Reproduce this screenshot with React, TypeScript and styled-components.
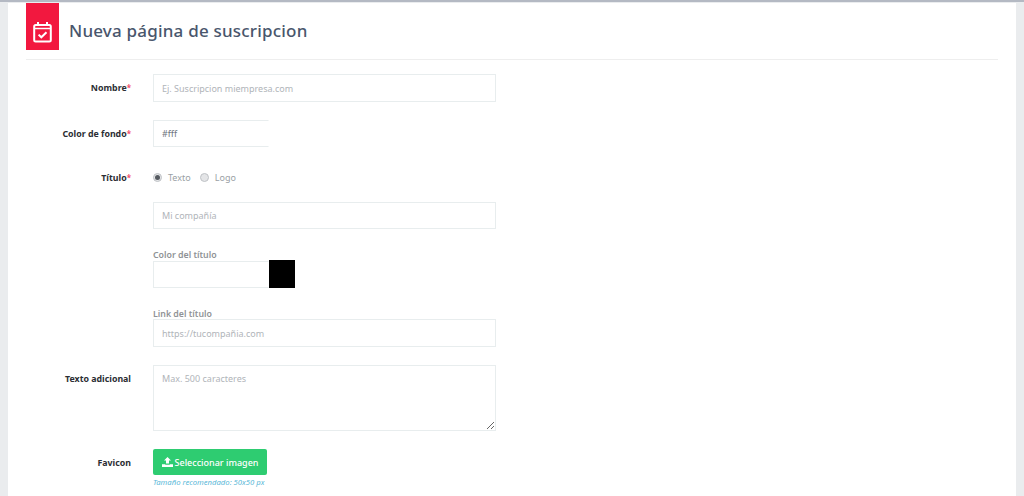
import React from 'react'
import styled, { createGlobalStyle } from 'styled-components'

const GlobalStyle = createGlobalStyle`
  html, body {
    margin: 0;
    height: 100%;
    overflow: hidden;
    background: #eaecee;
    font-family: "Noto Sans", "Open Sans", sans-serif;
  }
`

const Page = styled.div`
  height: 496px;
  border-top: 2px solid #b4b9c3;
  box-sizing: border-box;
  padding: 1px 8px 0;
  overflow: hidden;
`

const Card = styled.div`
  background: #fff;
  height: 600px;
  padding: 0 18px;
`

const Header = styled.div`
  display: flex;
  align-items: flex-start;
  height: 56px;
  border-bottom: 1px solid #eeeeee;
  margin-bottom: 14px;
`

const IconBox = styled.div`
  width: 33px;
  height: 47px;
  background: #f2183f;
  display: flex;
  align-items: flex-end;
  justify-content: center;
  padding-bottom: 7px;
  box-sizing: border-box;
`

const Title = styled.h1`
  margin: 16px 0 0 10px;
  font-size: 17px;
  line-height: 24px;
  font-weight: 500;
  letter-spacing: 0.2px;
  color: #49566c;
`

const Row = styled.div<{ $gap: number }>`
  display: grid;
  grid-template-columns: 105px 1fr;
  column-gap: 22px;
  margin-bottom: ${(p) => p.$gap}px;
`

const Label = styled.label`
  text-align: right;
  font-size: 8.8px;
  line-height: 14px;
  font-weight: 700;
  color: #2b2e33;
  padding-top: 6.5px;
`

const Req = styled.span`
  color: #f2506c;
  font-size: 8px;
`

const Field = styled.div<{ $gap?: number }>`
  display: flex;
  flex-direction: column;
  margin-bottom: ${(p) => p.$gap ?? 0}px;
`

const SubLabel = styled.div`
  font-size: 8.8px;
  line-height: 9px;
  padding-top: 2px;
  font-weight: 600;
  color: #8f9396;
`

const Input = styled.input<{ $h?: number; $w?: number; $open?: boolean }>`
  display: block;
  box-sizing: border-box;
  width: ${(p) => p.$w ?? 343}px;
  height: ${(p) => p.$h ?? 28}px;
  padding: 0 8px;
  border: 1px solid #e8edee;
  border-right-color: ${(p) => (p.$open ? 'transparent' : '#e8edee')};
  background: #fff;
  outline: none;
  font-family: inherit;
  font-size: 9px;
  color: #6f7680;

  &::placeholder {
    color: #b0b4b9;
    opacity: 1;
  }
`

const TextArea = styled.textarea`
  display: block;
  box-sizing: border-box;
  width: 343px;
  height: 66px;
  padding: 6px 8px;
  border: 1px solid #e8edee;
  outline: none;
  font-family: inherit;
  font-size: 9px;

  &::placeholder {
    color: #b0b4b9;
    opacity: 1;
  }
`

const ColorPick = styled.div`
  display: flex;
  align-items: flex-end;
`

const Swatch = styled.div`
  width: 26px;
  height: 28px;
  background: #000;
`

const Radios = styled.div`
  display: flex;
  align-items: center;
  height: 14px;
  padding-top: 6px;
  font-size: 9px;
  color: #9a9fa5;
`

const Radio = styled.span<{ $on?: boolean }>`
  display: inline-flex;
  align-items: center;
  justify-content: center;
  box-sizing: border-box;
  width: 9px;
  height: 9px;
  margin-right: 6px;
  border-radius: 50%;
  border: 1px solid #bfc2c6;
  background: #e4e5e7;

  &::after {
    content: '';
    display: ${(p) => (p.$on ? 'block' : 'none')};
    width: 5px;
    height: 5px;
    border-radius: 50%;
    background: #555a60;
  }
`

const RadioText = styled.span`
  margin-right: 9px;
`

const UploadButton = styled.button`
  display: flex;
  align-items: center;
  justify-content: center;
  gap: 2px;
  width: 114px;
  height: 26px;
  padding: 0;
  border: 0;
  border-radius: 2px;
  background: #2ecc71;
  color: #fff;
  font-family: inherit;
  font-size: 9px;
  font-weight: 500;
`

const Help = styled.div`
  margin-top: 1px;
  font-size: 7.7px;
  line-height: 12px;
  font-style: italic;
  color: #5bb8d8;
`

export default function App() {
  return (
    <>
      <GlobalStyle />
      <Page>
        <Card>
          <Header>
            <IconBox>
              <svg width="19" height="22" viewBox="0 0 19 22" fill="none" stroke="#fff">
                <rect x="1.2" y="4" width="16.6" height="16.6" rx="1.5" strokeWidth="2" />
                <path d="M5 1v4M14 1v4" strokeWidth="2" />
                <path d="M1.5 7.5h16" strokeWidth="1.5" />
                <path d="M5.6 13.6l2.7 2.7 5.2-5" strokeWidth="2" />
              </svg>
            </IconBox>
            <Title>Nueva página de suscripcion</Title>
          </Header>

          <Row $gap={18}>
            <Label>Nombre<Req>*</Req></Label>
            <Input placeholder="Ej. Suscripcion miempresa.com" />
          </Row>

          <Row $gap={17}>
            <Label>Color de fondo<Req>*</Req></Label>
            <Input $w={116} $h={27} $open defaultValue="#fff" />
          </Row>

          <Row $gap={0}>
            <Label>Título<Req>*</Req></Label>
            <div>
              <Field $gap={18}>
                <Radios>
                  <Radio $on />
                  <RadioText>Texto</RadioText>
                  <Radio />
                  <RadioText>Logo</RadioText>
                </Radios>
              </Field>
              <Field $gap={20}>
                <Input $h={27} placeholder="Mi compañía" />
              </Field>
              <Field $gap={20}>
                <SubLabel>Color del título</SubLabel>
                <ColorPick>
                  <Input $w={116} $h={27} $open />
                  <Swatch />
                </ColorPick>
              </Field>
              <Field $gap={18}>
                <SubLabel>Link del título</SubLabel>
                <Input placeholder="https://tucompañia.com" />
              </Field>
            </div>
          </Row>

          <Row $gap={18}>
            <Label>Texto adicional</Label>
            <TextArea placeholder="Max. 500 caracteres" />
          </Row>

          <Row $gap={0}>
            <Label>Favicon</Label>
            <div>
              <UploadButton>
                <svg width="11" height="10" viewBox="0 0 11 10" fill="#fff">
                  <path d="M5.5 0L9 3.6H7v3H4v-3H2zM0 7.2h3.2v.6h4.6v-.6H11V10H0z" />
                </svg>
                Seleccionar imagen
              </UploadButton>
              <Help>Tamaño recomendado: 50x50 px</Help>
            </div>
          </Row>
        </Card>
      </Page>
    </>
  )
}
